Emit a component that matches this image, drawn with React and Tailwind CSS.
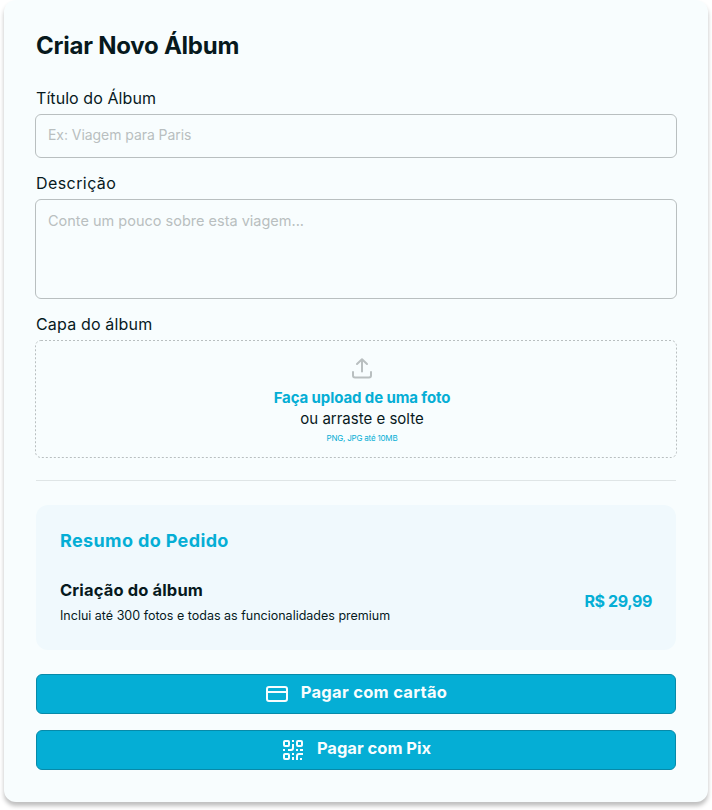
import React from "react";

function UploadIcon() {
  return (
    <svg width="24" height="24" viewBox="0 0 24 24" fill="none" stroke="#b9bfc0" strokeWidth="2" strokeLinecap="round" strokeLinejoin="round">
      <path d="M3 15v3.4a2 2 0 0 0 2 2h14a2 2 0 0 0 2-2V15" />
      <path d="M12 14.5V2.5M7 7l5-4.8L17 7" />
    </svg>
  );
}

function CardIcon() {
  return (
    <svg width="24" height="24" viewBox="0 0 24 24" fill="none" stroke="#f8fdfe" strokeWidth="2">
      <rect x="2" y="5" width="20" height="14" rx="2" />
      <path d="M2 10h20" />
    </svg>
  );
}

function QrIcon() {
  return (
    <svg width="24" height="24" viewBox="0 0 24 24" fill="none" stroke="#f8fdfe" strokeWidth="2">
      <rect x="3" y="3" width="5" height="5" rx="1" />
      <rect x="16" y="3" width="5" height="5" rx="1" />
      <rect x="3" y="16" width="5" height="5" rx="1" />
      <path d="M12 2v2M12 6v4a2 2 0 0 1-2 2H7M2 12h2M15 12h2M19 12h3M12 15v2M12 19v3M20 20v2M22 16h-4a2 2 0 0 0-2 2v4" />
    </svg>
  );
}

export default function App() {
  return (
    <div className="h-[810px] w-[712px] bg-white px-1 font-['Inter',sans-serif] text-[#07191d]">
      <main className="flex h-[802px] flex-col rounded-xl bg-[#f8fdfe] px-8 shadow-[0_4px_4px_rgba(0,0,0,0.25)]">
        <h1 className="mt-[30px] h-8 text-2xl leading-8 font-bold tracking-[-0.24px] whitespace-nowrap">Criar Novo Álbum</h1>

        <label className="mt-[24px] h-6 text-base leading-6 tracking-[0.07px] whitespace-nowrap">Título do Álbum</label>
        <div className="-mx-px mt-[4px] h-11 rounded-md border border-[#b9bfc0] px-3 text-sm leading-[40px] tracking-[-0.06px] text-[#b9bfc0]">Ex: Viagem para Paris</div>

        <label className="mt-[13px] h-6 text-base leading-6 tracking-[0.42px] whitespace-nowrap">Descrição</label>
        <div className="-mx-px mt-[4px] h-[100px] rounded-md border border-[#b9bfc0] px-3 pt-[11px] text-[14.5px] leading-5 text-[#b9bfc0]">Conte um pouco sobre esta viagem...</div>

        <label className="mt-[13px] h-6 text-base leading-6 tracking-[0.17px] whitespace-nowrap">Capa do álbum</label>
        <div className="relative -mx-px mt-[4px] flex h-[118px] flex-col items-center rounded-md pt-[17px] pl-3">
          <svg className="absolute inset-0" width="642" height="118" fill="none" stroke="#b9bfc0" strokeDasharray="2 2" aria-hidden="true">
            <rect x="0.5" y="0.5" width="641" height="117" rx="5.5" />
          </svg>
          <UploadIcon />
          <p className="mt-[6px] text-[15px] leading-[21px] font-bold tracking-[-0.1px] text-[#05aed5]">Faça upload de uma foto</p>
          <p className="text-[15px] leading-[21px]">ou arraste e solte</p>
          <p className="mt-[3px] text-[8px] leading-3 tracking-[-0.2px] text-[#05aed5]">PNG, JPG até 10MB</p>
        </div>

        <hr className="mt-[22px] border-t border-[#dfe5e6]" />

        <section className="mt-6 h-[145px] rounded-xl bg-[#f0f9fd] px-6 pt-[22px]">
          <h2 className="h-7 text-lg leading-7 font-bold tracking-[0.37px] text-[#05aed5]">Resumo do Pedido</h2>
          <div className="mt-[22px] flex items-center justify-between">
            <div className="pt-px whitespace-nowrap">
              <h3 className="text-[16.5px] leading-6 font-bold tracking-[0.14px]">Criação do álbum</h3>
              <p className="mt-[4px] text-[12.5px] leading-5">Inclui até 300 fotos e todas as funcionalidades premium</p>
            </div>
            <strong className="pb-[2px] text-base leading-6 font-bold tracking-[-0.4px] text-[#05aed5]">R$ 29,99</strong>
          </div>
        </section>

        <button className="mt-6 flex h-10 shrink-0 items-center justify-center rounded-md border border-[#078aa9] bg-[#05aed5] text-[#f8fdfe]">
          <CardIcon />
          <span className="ml-3 -mt-[5px] text-[16.5px] leading-6 font-bold tracking-[0.3px]">Pagar com cartão</span>
        </button>
        <button className="mt-4 flex h-10 shrink-0 items-center justify-center rounded-md border border-[#078aa9] bg-[#05aed5] text-[#f8fdfe]">
          <QrIcon />
          <span className="ml-3 -mt-[5px] text-[16.5px] leading-6 font-bold">Pagar com Pix</span>
        </button>
      </main>
    </div>
  );
}
